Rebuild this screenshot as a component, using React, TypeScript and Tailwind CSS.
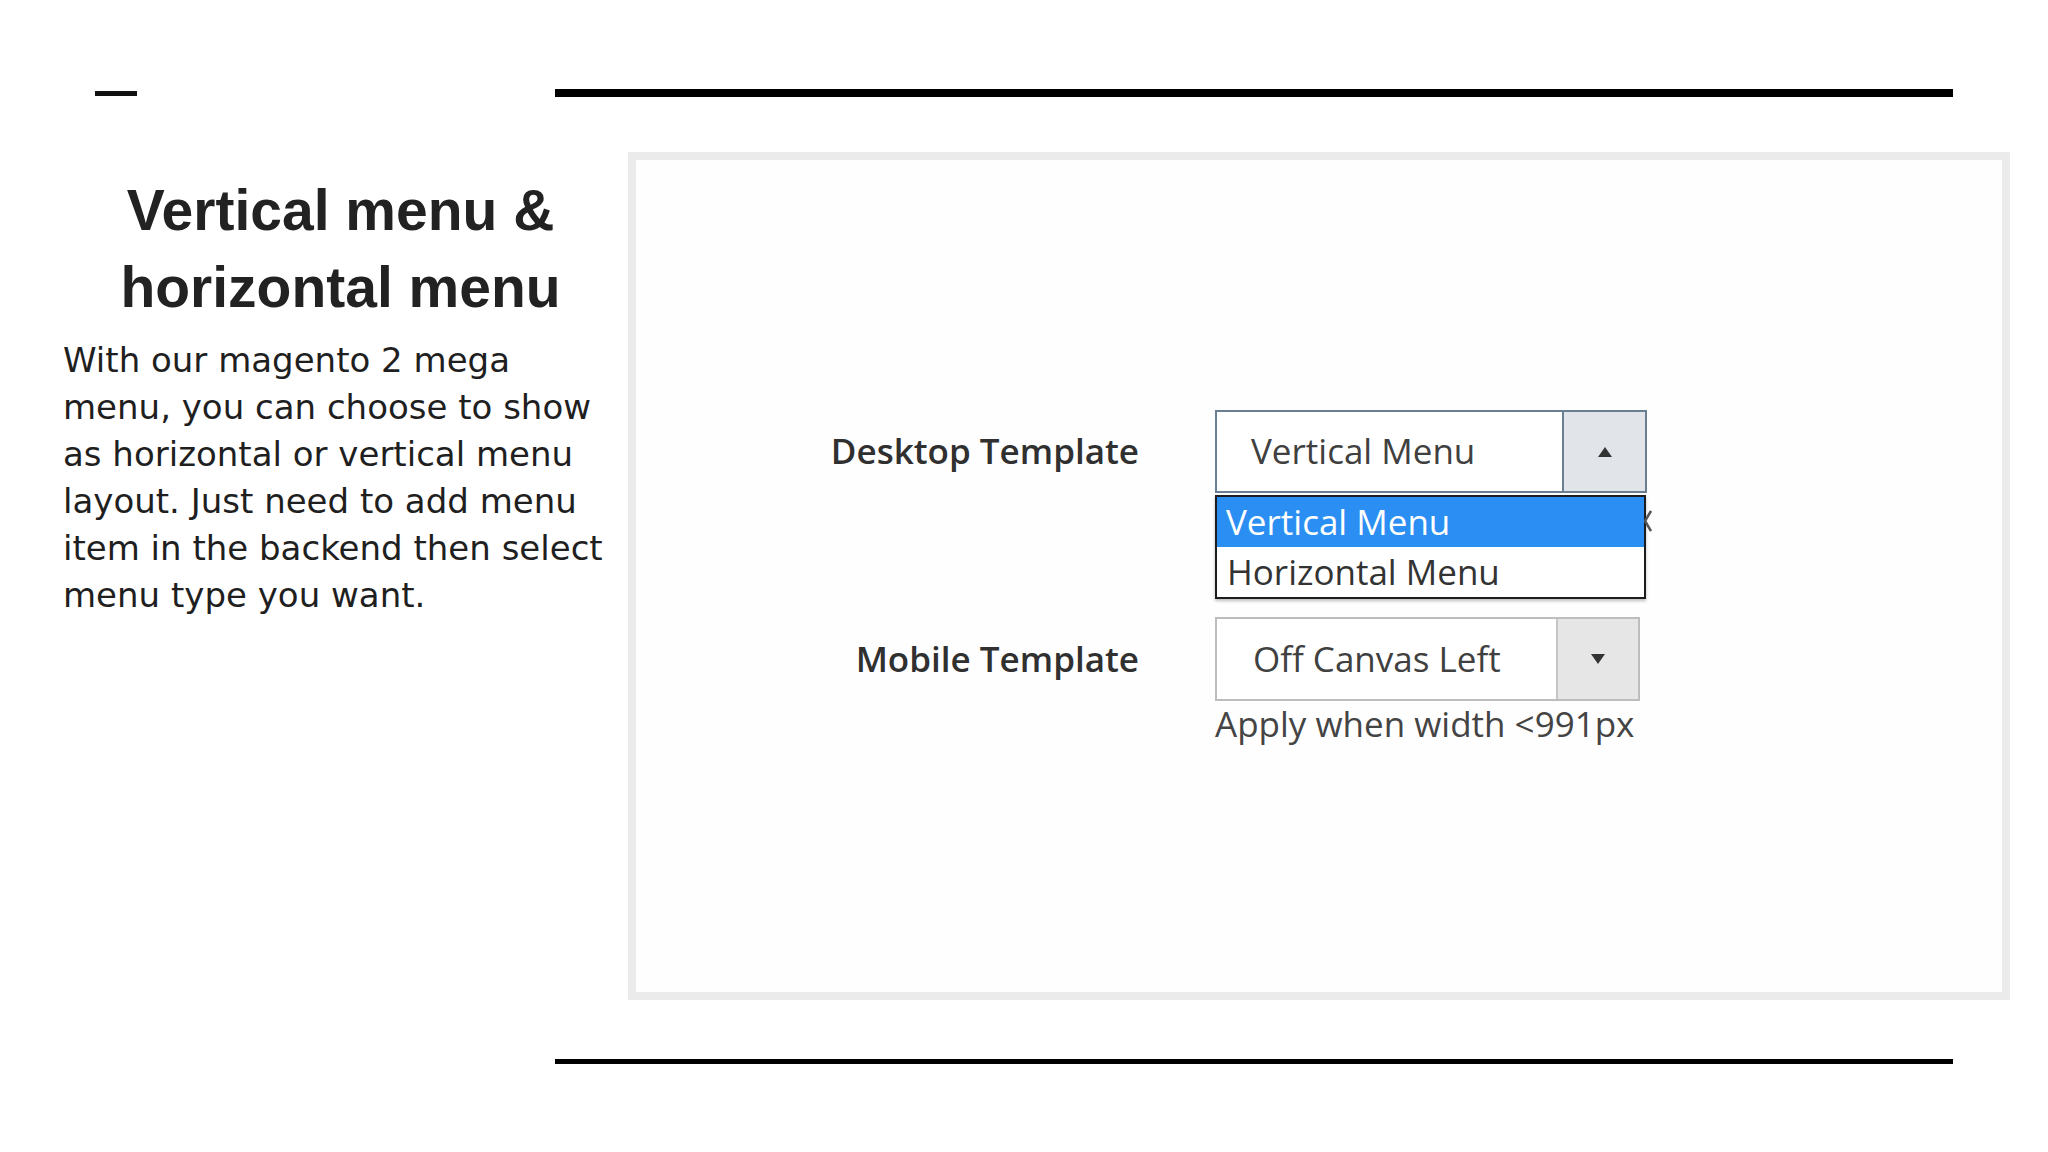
const formFont = "font-['Open_Sans','Noto_Sans',sans-serif]"

function Arrow({ up }: { up?: boolean }) {
    return (
        <svg width="14" height="10" viewBox="0 0 14 10" className="block">
            {up ? <path d="M7 0 L14 10 L0 10 Z" fill="#333" /> : <path d="M0 0 L14 0 L7 10 Z" fill="#333" />}
        </svg>
    )
}

function FieldLabel({ children, height }: { children: string; height: string }) {
    return (
        <div className={`flex w-[320px] items-center justify-end ${height} text-[35px] font-semibold text-[#303030] ${formFont}`}>
            {children}
        </div>
    )
}

export default function App() {
    return (
        <div className="h-[1152px] w-[2048px] overflow-hidden bg-white">
            <div className="flex items-center pt-[89px]">
                <div className="ml-[95px] h-[5px] w-[42px] bg-[#111]"></div>
                <div className="ml-[418px] h-[8px] w-[1398px] bg-black"></div>
            </div>

            <div className="mt-[55px] flex">
                <div className="ml-[63px] w-[555px] pt-[20px]">
                    <h1 className="text-center font-['Liberation_Sans','Arial',sans-serif] text-[57px] font-bold leading-[77px] text-[#222]">
                        Vertical menu &amp;<br />horizontal menu
                    </h1>
                    <p className="mt-[11px] font-['DejaVu_Sans','Verdana',sans-serif] text-[34px] leading-[47px] text-[#1f1f1f]">
                        With our magento 2 mega menu, you can choose to show as horizontal or vertical menu layout. Just need to add menu item in the backend then select menu type you want.
                    </p>
                </div>

                <div className="ml-[10px] h-[848px] w-[1382px] border-[8px] border-[#ebebeb] bg-[#fefefe]">
                    <div className="flex flex-col pl-[183px] pt-[250px]">
                        <div className="flex gap-[76px]">
                            <FieldLabel height="h-[83px]">Desktop Template</FieldLabel>
                            <div className="flex w-[432px] flex-col">
                                <div className="flex h-[83px] border-2 border-[#6a7f92] bg-white">
                                    <div className={`flex flex-1 items-center pl-[34px] text-[35px] text-[#404040] ${formFont}`}>Vertical Menu</div>
                                    <div className="flex w-[83px] items-center justify-center border-l-2 border-[#6a7f92] bg-[#e1e4e8]">
                                        <Arrow up />
                                    </div>
                                </div>
                                <div className="relative mt-[2px] flex h-[104px] w-[431px] flex-col border-2 border-[#1c1c1c] bg-white shadow-[0_2px_3px_rgba(0,0,0,0.25)]">
                                    <div className={`flex h-[50px] items-center bg-[#2b8ef2] pl-[9px] text-[35px] text-white ${formFont}`}>Vertical Menu</div>
                                    <div className={`flex h-[50px] items-center pl-[10px] text-[35px] text-[#333] ${formFont}`}>Horizontal Menu</div>
                                    <svg width="8" height="24" viewBox="0 0 8 24" className="absolute -right-[8px] top-[12px]">
                                        <path d="M7 2 L1 12 L7 22" fill="none" stroke="#555" strokeWidth="2.5" />
                                    </svg>
                                </div>
                            </div>
                        </div>

                        <div className="mt-[18px] flex gap-[76px]">
                            <FieldLabel height="h-[84px]">Mobile Template</FieldLabel>
                            <div className="flex w-[425px] flex-col">
                                <div className="flex h-[84px] border-2 border-[#bdbdbd] bg-white">
                                    <div className={`flex flex-1 items-center pl-[36px] text-[35px] text-[#404040] ${formFont}`}>Off Canvas Left</div>
                                    <div className="flex w-[82px] items-center justify-center border-l-2 border-[#c6c6c6] bg-[#e6e6e6]">
                                        <Arrow />
                                    </div>
                                </div>
                                <div className={`whitespace-nowrap text-[35px] leading-[46px] text-[#444] ${formFont}`}>Apply when width &lt;991px</div>
                            </div>
                        </div>
                    </div>
                </div>
            </div>

            <div className="ml-[555px] mt-[59px] h-[5px] w-[1398px] bg-black"></div>
        </div>
    )
}
